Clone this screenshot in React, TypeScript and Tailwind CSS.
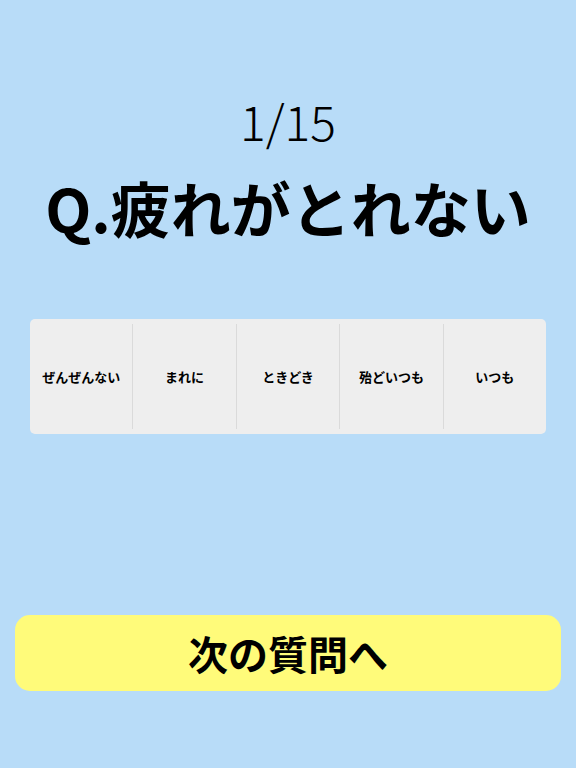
import { useState } from 'react'

const options = ['ぜんぜんない', 'まれに', 'ときどき', '殆どいつも', 'いつも']

export default function App() {
  const [selected, setSelected] = useState<number | null>(null)

  return (
    <div
      className="w-[576px] h-[768px] bg-[#b8dcf8] flex flex-col items-center text-black"
      style={{ fontFamily: '"Noto Sans CJK JP", "Noto Sans", sans-serif' }}
    >
      <p className="mt-[90px] text-[48px] leading-[60px] font-light">1/15</p>
      <h1 className="mt-[22px] text-[60px] leading-[70px] font-bold">Q.疲れがとれない</h1>

      <div className="mt-[77px] w-[516px] h-[115px] bg-[#eeeeee] rounded-[5px] flex items-stretch py-[5px]">
        {options.map((o, i) => (
          <button
            key={o}
            onClick={() => setSelected(i)}
            className={`flex-1 flex items-center justify-center text-[13px] font-bold ${
              i > 0 ? 'border-l border-[#dadada]' : ''
            } ${selected === i ? 'bg-[#dcdcdc]' : ''}`}
          >
            {o}
          </button>
        ))}
      </div>

      <button className="mt-auto mb-[77px] w-[546px] h-[76px] bg-[#fffb7a] rounded-[15px] flex items-center justify-center text-[40px] font-bold">
        次の質問へ
      </button>
    </div>
  )
}
